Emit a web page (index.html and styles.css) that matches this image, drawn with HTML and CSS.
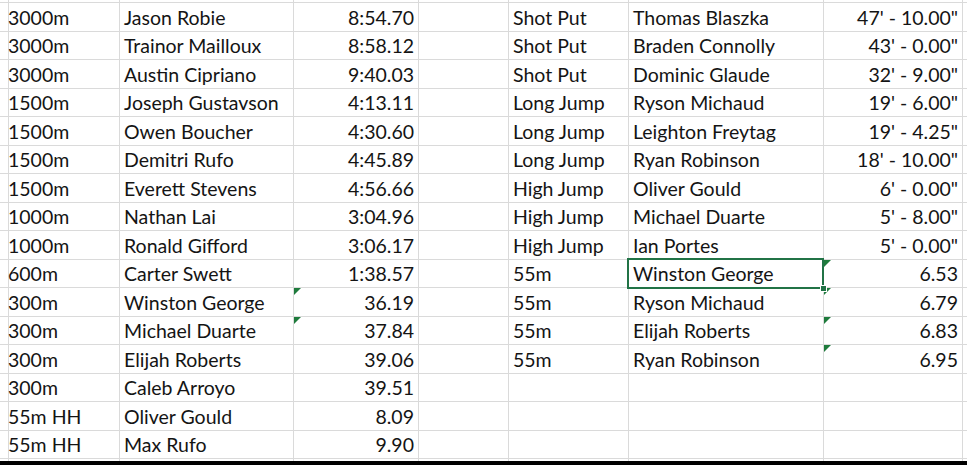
FILE: index.html
```html
<!DOCTYPE html>
<html lang="en">
<head>
<meta charset="utf-8">
<title>Track results</title>
<link rel="stylesheet" href="styles.css">
</head>
<body>
<div class="sheet">
  <div class="row top"><div class="c"></div><div class="c"></div><div class="c"></div><div class="c"></div><div class="c"></div><div class="c"></div><div class="c"></div><div class="c"></div><div class="c"></div></div>

  <div class="row"><div class="c"></div><div class="c ev">3000m</div><div class="c">Jason Robie</div><div class="c num">8:54.70</div><div class="c"></div><div class="c">Shot Put</div><div class="c">Thomas Blaszka</div><div class="c num">47' - 10.00"</div><div class="c"></div></div>
  <div class="row"><div class="c"></div><div class="c ev">3000m</div><div class="c">Trainor Mailloux</div><div class="c num">8:58.12</div><div class="c"></div><div class="c">Shot Put</div><div class="c">Braden Connolly</div><div class="c num">43' - 0.00"</div><div class="c"></div></div>
  <div class="row"><div class="c"></div><div class="c ev">3000m</div><div class="c">Austin Cipriano</div><div class="c num">9:40.03</div><div class="c"></div><div class="c">Shot Put</div><div class="c">Dominic Glaude</div><div class="c num">32' - 9.00"</div><div class="c"></div></div>
  <div class="row"><div class="c"></div><div class="c ev">1500m</div><div class="c">Joseph Gustavson</div><div class="c num">4:13.11</div><div class="c"></div><div class="c">Long Jump</div><div class="c">Ryson Michaud</div><div class="c num">19' - 6.00"</div><div class="c"></div></div>
  <div class="row"><div class="c"></div><div class="c ev">1500m</div><div class="c">Owen Boucher</div><div class="c num">4:30.60</div><div class="c"></div><div class="c">Long Jump</div><div class="c">Leighton Freytag</div><div class="c num">19' - 4.25"</div><div class="c"></div></div>
  <div class="row"><div class="c"></div><div class="c ev">1500m</div><div class="c">Demitri Rufo</div><div class="c num">4:45.89</div><div class="c"></div><div class="c">Long Jump</div><div class="c">Ryan Robinson</div><div class="c num">18' - 10.00"</div><div class="c"></div></div>
  <div class="row"><div class="c"></div><div class="c ev">1500m</div><div class="c">Everett Stevens</div><div class="c num">4:56.66</div><div class="c"></div><div class="c">High Jump</div><div class="c">Oliver Gould</div><div class="c num">6' - 0.00"</div><div class="c"></div></div>
  <div class="row"><div class="c"></div><div class="c ev">1000m</div><div class="c">Nathan Lai</div><div class="c num">3:04.96</div><div class="c"></div><div class="c">High Jump</div><div class="c">Michael Duarte</div><div class="c num">5' - 8.00"</div><div class="c"></div></div>
  <div class="row"><div class="c"></div><div class="c ev">1000m</div><div class="c">Ronald Gifford</div><div class="c num">3:06.17</div><div class="c"></div><div class="c">High Jump</div><div class="c">Ian Portes</div><div class="c num">5' - 0.00"</div><div class="c"></div></div>
  <div class="row"><div class="c"></div><div class="c ev">600m</div><div class="c">Carter Swett</div><div class="c num">1:38.57</div><div class="c"></div><div class="c">55m</div><div class="c selected">Winston George<span class="handle"></span></div><div class="c num flag">6.53</div><div class="c"></div></div>
  <div class="row"><div class="c"></div><div class="c ev">300m</div><div class="c">Winston George</div><div class="c num flag">36.19</div><div class="c"></div><div class="c">55m</div><div class="c">Ryson Michaud</div><div class="c num flag">6.79</div><div class="c"></div></div>
  <div class="row"><div class="c"></div><div class="c ev">300m</div><div class="c">Michael Duarte</div><div class="c num flag">37.84</div><div class="c"></div><div class="c">55m</div><div class="c">Elijah Roberts</div><div class="c num flag">6.83</div><div class="c"></div></div>
  <div class="row"><div class="c"></div><div class="c ev">300m</div><div class="c">Elijah Roberts</div><div class="c num">39.06</div><div class="c"></div><div class="c">55m</div><div class="c">Ryan Robinson</div><div class="c num flag">6.95</div><div class="c"></div></div>
  <div class="row"><div class="c"></div><div class="c ev">300m</div><div class="c">Caleb Arroyo</div><div class="c num">39.51</div><div class="c"></div><div class="c"></div><div class="c"></div><div class="c num"></div><div class="c"></div></div>
  <div class="row"><div class="c"></div><div class="c ev">55m HH</div><div class="c">Oliver Gould</div><div class="c num">8.09</div><div class="c"></div><div class="c"></div><div class="c"></div><div class="c num"></div><div class="c"></div></div>
  <div class="row"><div class="c"></div><div class="c ev">55m HH</div><div class="c">Max Rufo</div><div class="c num">9.90</div><div class="c"></div><div class="c"></div><div class="c"></div><div class="c num"></div><div class="c"></div></div>

  <div class="row tail"><div class="c"></div><div class="c"></div><div class="c"></div><div class="c"></div><div class="c"></div><div class="c"></div><div class="c"></div><div class="c"></div><div class="c"></div></div>
</div>
<div class="frame-bottom"></div>
</body>
</html>
```

FILE: styles.css
```css
html, body {
  margin: 0;
  padding: 0;
  background: #ffffff;
}

body {
  width: 967px;
  height: 465px;
  overflow: hidden;
  font-family: Lato, "Open Sans", sans-serif;
  font-size: 19.5px;
  color: #141414;
}

.sheet {
  height: 461px;
  overflow: hidden;
}

.row {
  display: grid;
  grid-template-columns: 1px 119px 174px 125px 90px 120px 195px 139px 1fr;
  height: 28.5px;
}

.row.top {
  height: 3px;
}

.row.tail {
  height: 10px;
}

.c {
  box-sizing: border-box;
  border-right: 1px solid #dadada;
  border-bottom: 1px solid #dadada;
  padding: 0 4px 2px 4px;
  display: flex;
  align-items: flex-end;
  white-space: nowrap;
  overflow: visible;
  position: relative;
  line-height: 22px;
}

.c.ev {
  padding-left: 7px;
}

.c.num {
  justify-content: flex-end;
}

.c.flag::before {
  content: "";
  position: absolute;
  left: 0;
  top: 0;
  width: 0;
  height: 0;
  border-top: 7px solid #1e7b3c;
  border-right: 7px solid transparent;
  z-index: 2;
}

.c.selected::after {
  content: "";
  position: absolute;
  left: -2px;
  top: -2px;
  right: -1px;
  bottom: -2px;
  border: 2px solid #217346;
  z-index: 3;
}

.handle {
  position: absolute;
  right: -4px;
  bottom: -5px;
  width: 5px;
  height: 5px;
  background: #217346;
  border: 1px solid #ffffff;
  z-index: 4;
}

.frame-bottom {
  height: 4px;
  background: #000000;
}
```
